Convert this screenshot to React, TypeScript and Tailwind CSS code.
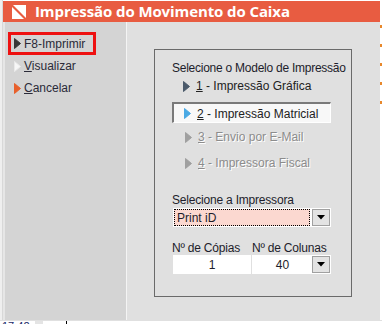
import React from "react";

const Tri = ({ color, stroke }: { color: string; stroke?: string }) => (
  <svg width="7" height="11" viewBox="0 0 7 11" className="shrink-0">
    <polygon points="0.5,0.5 6.5,5.5 0.5,10.5" fill={color} stroke={stroke ?? color} strokeWidth="1" />
  </svg>
);

const DropBtn = () => (
  <div className="w-[18px] h-[17px] bg-[#e3e3e3] border border-[#a0a0a0] flex items-center justify-center shrink-0">
    <svg width="8" height="5" viewBox="0 0 8 5">
      <polygon points="0,0 8,0 4,4.5" fill="#000" />
    </svg>
  </div>
);

export default function App() {
  const sans = { fontFamily: '"Liberation Sans", Arial, sans-serif' };
  const narrow = { fontFamily: '"Liberation Sans Narrow", "Liberation Sans", Arial, sans-serif' };
  return (
    <div className="w-[382px] h-[324px] bg-white overflow-hidden flex flex-col" style={sans}>
      <div className="flex h-[320px]">
        {/* left outside strip */}
        <div className="w-[3px] bg-[#efefef] border-r border-[#d8d8d8]" />
        {/* window */}
        <div className="w-[377px] flex flex-col">
          <div className="h-[1px] bg-white" />
          <div className="h-[21px] bg-[#e85c41] flex items-center pl-[9px]">
            <svg width="14" height="14" viewBox="0 0 14 14" className="shrink-0">
              <polygon points="1,0 14,0 14,13" fill="#fff" />
              <polygon points="0,2 0,14 12,14" fill="#fff" />
            </svg>
            <span className="ml-[9px] text-white font-bold text-[15px] leading-none tracking-[-0.1px]" style={{ fontFamily: '"Open Sans", "Liberation Sans", sans-serif' }}>
              Impressão do Movimento do Caixa
            </span>
          </div>
          <div className="flex h-[298px]">
            <div className="w-[2px] bg-[#e6e6e6]" />
            {/* left pane */}
            <div className="w-[121px] bg-[#d4d4d4] flex flex-col pt-[10px] pl-[3px]">
              <div className="w-[88px] h-[23px] border-[3px] border-[#ee1111] flex items-center pl-[3px]">
                <Tri color="#383838" />
                <span className="ml-[3px] text-[12px] text-[#2a2a38]">F8-Imprimir</span>
              </div>
              <div className="h-[22px] flex items-center pl-[6px] mt-[0px]">
                <Tri color="#f7f7f7" stroke="#eaeaea" />
                <span className="ml-[3px] text-[12px] text-[#2a2a38]"><span className="underline">V</span>isualizar</span>
              </div>
              <div className="h-[22px] flex items-center pl-[6px]">
                <Tri color="#e8602c" />
                <span className="ml-[3px] text-[12px] text-[#2a2a38]"><span className="underline">C</span>ancelar</span>
              </div>
            </div>
            <div className="w-[1px] bg-[#f4f4f4]" />
            {/* right pane */}
            <div className="flex-1 bg-[#e0e0e0] pl-[27px] pt-[27px]">
              <div className="w-[198px] h-[248px] border border-[#6a6a6a] flex flex-col pl-[17px]">
                <div className="h-[18px] mt-[9px] flex items-center text-[12px] text-[#1d1d2b] tracking-[-0.25px] whitespace-nowrap">
                  Selecione o Modelo de Impressão
                </div>
                <div className="h-[18px] flex items-center pl-[11px]" style={narrow}>
                  <Tri color="#4b5a6b" />
                  <span className="ml-[6px] text-[12px] text-[#222]"><span className="underline">1</span> - Impressão Gráfica</span>
                </div>
                <div className="mt-[7px] w-[159px] h-[21px] bg-[#f8f8f8] border-t-2 border-l-2 border-[#7a7a7a] border-b border-r border-b-white border-r-white flex items-center pl-[10px] pt-[1px]" style={narrow}>
                  <Tri color="#4aa9e4" />
                  <span className="ml-[6px] text-[12px] text-[#222]"><span className="underline">2</span> - Impressão Matricial</span>
                </div>
                <div className="mt-[5px] h-[18px] flex items-center pl-[13px]" style={narrow}>
                  <Tri color="#a0a0a0" />
                  <span className="ml-[6px] text-[12px] text-[#8c8c8c] [text-shadow:1px_1px_0_#ffffff]"><span className="underline">3</span> - Envio por E-Mail</span>
                </div>
                <div className="mt-[8px] h-[18px] flex items-center pl-[13px]" style={narrow}>
                  <Tri color="#a0a0a0" />
                  <span className="ml-[6px] text-[12px] text-[#8c8c8c] [text-shadow:1px_1px_0_#ffffff]"><span className="underline">4</span> - Impressora Fiscal</span>
                </div>
                <div className="mt-[20px] h-[16px] flex items-center text-[12px] text-[#1d1d2b] tracking-[-0.2px] whitespace-nowrap">
                  Selecione a Impressora
                </div>
                <div className="ml-[1px] w-[158px] h-[19px] bg-white p-[1px] flex">
                  <div className="flex-1 bg-[#fbd8d0] border border-dotted border-black flex items-center pl-[2px] text-[12px] text-[#1d1d2b]">
                    Print iD
                  </div>
                  <div className="w-[2px]" />
                  <DropBtn />
                </div>
                <div className="mt-[14px] h-[14px] flex items-center text-[12px] text-[#1d1d2b] whitespace-nowrap tracking-[-0.2px]">
                  <span className="w-[80px]">Nº de Cópias</span>
                  <span>Nº de Colunas</span>
                </div>
                <div className="ml-[1px] h-[19px] flex">
                  <div className="w-[78px] bg-white flex items-center justify-center text-[12px] text-[#1d1d2b]">1</div>
                  <div className="w-[1px]" />
                  <div className="w-[79px] bg-white flex items-center p-[1px]">
                    <div className="flex-1 text-center text-[12px] text-[#1d1d2b]">40</div>
                    <DropBtn />
                  </div>
                </div>
              </div>
            </div>
          </div>
        </div>
        {/* right outside strip */}
        <div className="w-[2px] bg-white flex flex-col pt-[25px] gap-[16px]">
          <div className="h-[3px] bg-[#e8882c]" />
          <div className="h-[3px] bg-[#e8882c]" />
          <div className="h-[3px] bg-[#e8882c]" />
          <div className="h-[3px] bg-[#e8882c]" />
          <div className="h-[3px] bg-[#e8882c]" />
        </div>
      </div>
      <div className="h-[4px] bg-white border-t border-[#e0e0e0] flex overflow-hidden">
        <div className="w-[35px] overflow-hidden text-[11px] leading-[11px] pl-[2px] text-[#1a2a6a]">17:42</div>
        <div className="w-[8px] bg-[#e4e4e4]" />
        <div className="w-[24px] border-r border-black" />
      </div>
    </div>
  );
}
